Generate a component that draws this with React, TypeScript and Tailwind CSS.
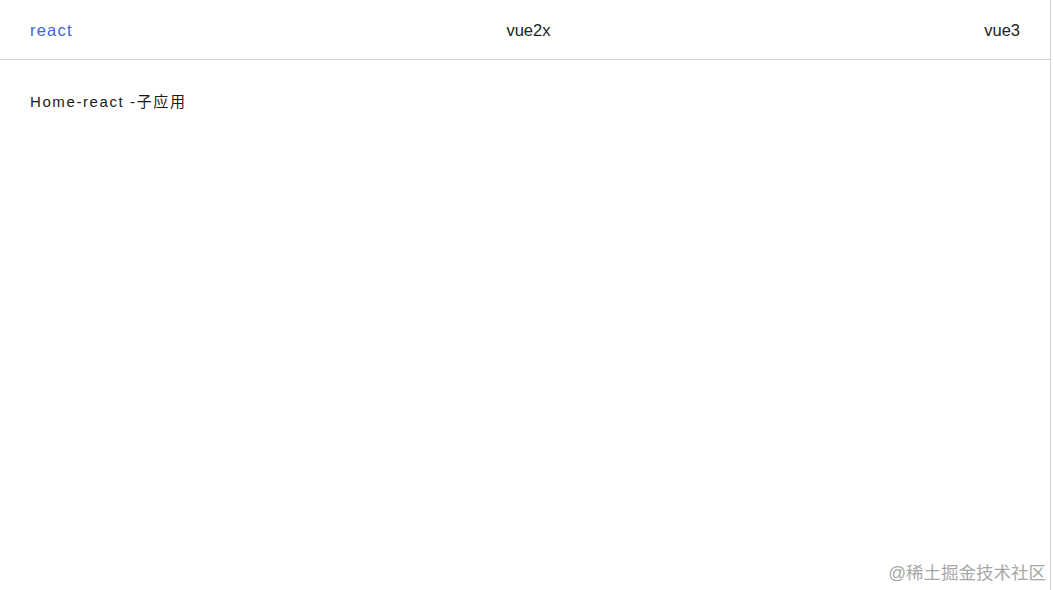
import React from "react";

export default function App() {
  return (
    <div className="relative h-[590px] w-[1051px] border-r border-[#d4d4d4] bg-white font-['Liberation_Sans','Noto_Sans_CJK_SC',sans-serif]">
      {/* 顶部导航 */}
      <nav className="flex h-[60px] items-center justify-between border-b border-[#cfcfcf] px-[30px] pt-[1px] text-[16.5px] text-[#222]">
        <a className="tracking-[1.2px] text-[#3a64e0]">react</a>
        <a>vue2x</a>
        <a>vue3</a>
      </nav>

      {/* 子应用内容 */}
      <div className="px-[30px] pt-[31px] text-[15px] tracking-[1.6px] text-[#1a1a1a]">
        Home-react -子应用
      </div>

      {/* 水印 */}
      <div className="absolute bottom-[4px] right-[4px] text-[17.5px] text-[#a8a8a8]">
        @稀土掘金技术社区
      </div>
    </div>
  );
}
